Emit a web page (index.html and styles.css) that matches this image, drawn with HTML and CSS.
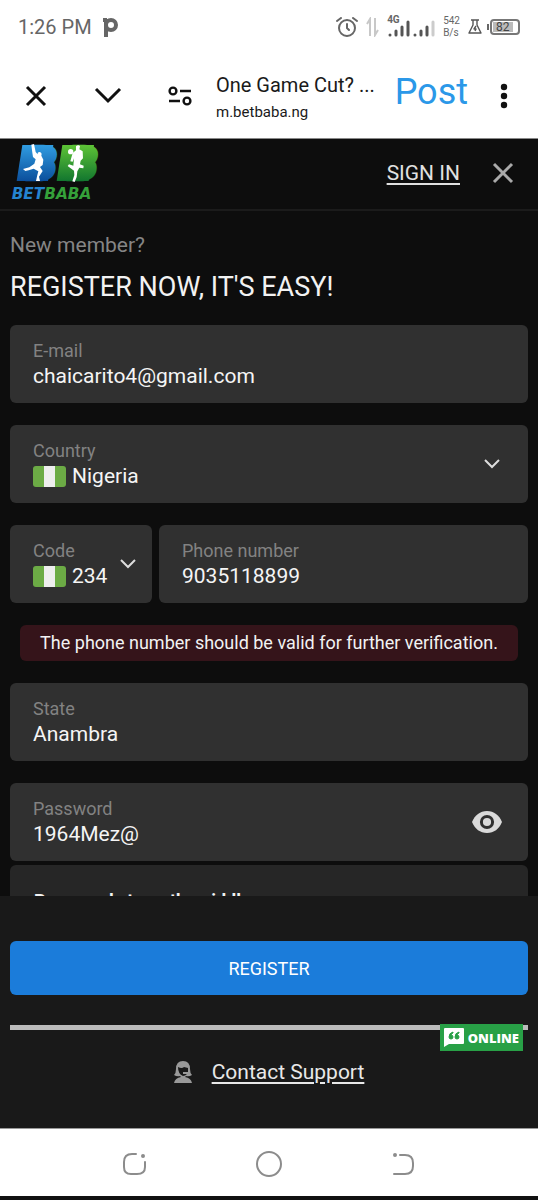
FILE: index.html
```html
<!DOCTYPE html>
<html lang="en">
<head>
  <meta charset="UTF-8" />
  <title>One Game Cut? - Betbaba</title>
  <meta name="viewport" content="width=device-width, initial-scale=1" />
  <link rel="stylesheet" href="styles.css">
</head>
<body>
  <!-- Phone status bar -->
  <div class="status-bar">
    <span class="status-time">1:26 PM</span>
    <svg class="status-app" width="15" height="19" viewBox="0 0 15 19" fill="none" stroke="#666" stroke-width="4">
      <path d="M3 19V1M0 2H4" />
      <circle cx="8" cy="7" r="5" />
    </svg>
    <div class="status-icons">
      <svg width="22" height="20" viewBox="0 0 22 20" fill="none" stroke="#666" stroke-width="2" stroke-linecap="round">
        <circle cx="11" cy="11" r="8" />
        <path d="M1 4L5 1M21 4L17 1M11 7V11L13 13" />
      </svg>
      <svg width="13" height="20" viewBox="0 0 13 20" fill="none" stroke="#c8c8c8" stroke-width="2">
        <path d="M4 19V2L1 7M9 1V18L12 13" />
      </svg>
      <div class="signal">
        <span class="signal-type">4G</span>
        <svg width="48" height="17" viewBox="0 0 48 17" stroke="#555" stroke-width="3" stroke-linecap="round">
          <path d="M3 15V15M9 15V11M15 15V7M21 15V2M28 15V15M34 15V11M40 15V7" />
          <path d="M46 15V2" stroke="#ccc" />
        </svg>
      </div>
      <div class="speed">542<br />B/s</div>
      <svg width="14" height="16" viewBox="0 0 14 16" fill="none" stroke="#555" stroke-width="1.4" stroke-linejoin="round">
        <path d="M3 1H11M5 1V6L1 14H13L9 6V1M8 7L6 10H8L7 12" />
      </svg>
      <div class="battery"><span>82</span></div>
    </div>
  </div>

  <!-- Browser bar -->
  <div class="browser-bar">
    <button class="icon-btn" aria-label="Close tab">
      <svg width="22" height="22" viewBox="0 0 22 22" fill="none" stroke="#111" stroke-width="3">
        <path d="M2 2L20 20M20 2L2 20" />
      </svg>
    </button>
    <button class="icon-btn" aria-label="Minimise">
      <svg width="28" height="18" viewBox="0 0 28 18" fill="none" stroke="#111" stroke-width="3">
        <path d="M2 2L14 14L26 2" />
      </svg>
    </button>
    <button class="icon-btn" aria-label="Site settings">
      <svg width="24" height="20" viewBox="0 0 24 20" fill="none" stroke="#111" stroke-width="2.4">
        <circle cx="5" cy="5" r="3.4" />
        <circle cx="19" cy="15" r="3.4" />
        <path d="M12 5H23M1 15H12" />
      </svg>
    </button>
    <div class="page-info">
      <div class="page-title">One Game Cut? ...</div>
      <div class="page-url">m.betbaba.ng</div>
    </div>
    <button class="post-btn">Post</button>
    <button class="icon-btn more-btn" aria-label="More">
      <svg width="8" height="26" viewBox="0 0 8 26" fill="#111">
        <circle cx="4" cy="4" r="3.2" />
        <circle cx="4" cy="13" r="3.2" />
        <circle cx="4" cy="22" r="3.2" />
      </svg>
    </button>
  </div>

  <!-- Site header -->
  <header class="site-header">
    <a href="#" class="logo" aria-label="Betbaba">
      <svg width="94" height="58" viewBox="30 20 282 174">
        <defs>
          <linearGradient id="blue" gradientUnits="userSpaceOnUse" x1="0" y1="28" x2="0" y2="134">
            <stop offset="0" stop-color="#2f9be0" />
            <stop offset="1" stop-color="#0b4f9c" />
          </linearGradient>
          <linearGradient id="green" gradientUnits="userSpaceOnUse" x1="0" y1="28" x2="0" y2="134">
            <stop offset="0" stop-color="#5cc236" />
            <stop offset="1" stop-color="#12762f" />
          </linearGradient>
        </defs>
        <g class="logo-mark">
          <text x="76" y="124" fill="url(#blue)" stroke="url(#blue)">B</text>
          <path d="M67 26H160L144 134H50Z" fill="url(#blue)" />
          <text x="199" y="124" fill="url(#green)" stroke="url(#green)">B</text>
          <path d="M187 26H282L266 134H170Z" fill="url(#green)" />
        </g>
        <path d="M94 25L102 23L107 47L113 54Q112 47 119 47Q127 49 124 58L130 70L128 86L120 92L128 104L117 121L120 134L108 134L112 116L115 105L101 97L86 102L76 104L69 98L88 93L103 82L107 69L99 62L97 49Z" fill="#fff" />
        <g fill="#fff">
          <circle cx="212" cy="46" r="8" />
          <path d="M228 30Q234 24 240 29L238 39L248 45L249 66L242 73L240 84L251 88L250 96L238 94L232 105L230 122L224 137L217 135L223 116L222 103L212 96L203 89L207 84L220 88L222 66L218 76L211 75L218 50L228 42Z" />
        </g>
        <text class="logo-word" x="35" y="189"><tspan fill="#2583cf">BET</tspan><tspan fill="#35a13a">BABA</tspan></text>
      </svg>
    </a>
    <a href="#" class="sign-in">SIGN IN</a>
    <button class="icon-btn" aria-label="Close">
      <svg width="22" height="22" viewBox="0 0 22 22" fill="none" stroke="#aaa" stroke-width="3">
        <path d="M2 2L20 20M20 2L2 20" />
      </svg>
    </button>
  </header>

  <!-- Registration form -->
  <main class="content">
    <p class="intro">New member?</p>
    <h1>REGISTER NOW, IT'S EASY!</h1>

    <form class="register-form" id="registerForm">
      <div class="field">
        <label for="email">E-mail</label>
        <input type="email" id="email" value="chaicarito4@gmail.com" autocomplete="off" />
      </div>

      <div class="field">
        <label for="country">Country</label>
        <div class="flag-row">
          <span class="flag"></span>
          <select id="country"><option>Nigeria</option></select>
        </div>
        <svg class="field-icon" width="16" height="10" viewBox="0 0 16 10" fill="none" stroke="#ddd" stroke-width="2">
          <path d="M1 1L8 8L15 1" />
        </svg>
      </div>

      <div class="phone-row">
        <div class="field code-field">
          <label for="code">Code</label>
          <div class="flag-row">
            <span class="flag"></span>
            <select id="code"><option>234</option></select>
          </div>
          <svg class="field-icon" width="16" height="10" viewBox="0 0 16 10" fill="none" stroke="#ddd" stroke-width="2">
            <path d="M1 1L8 8L15 1" />
          </svg>
        </div>
        <div class="field">
          <label for="phone">Phone number</label>
          <input type="tel" id="phone" value="9035118899" />
        </div>
      </div>

      <p class="notice">The phone number should be valid for further verification.</p>

      <div class="field">
        <label for="state">State</label>
        <input type="text" id="state" value="Anambra" />
      </div>

      <div class="password-group">
        <div class="field">
          <label for="password">Password</label>
          <input type="text" id="password" value="1964Mez@" autocomplete="off" />
          <button type="button" class="icon-btn field-icon" aria-label="Hide password">
            <svg width="30" height="22" viewBox="0 0 30 22">
              <path d="M15 0C8 0 3 4 0 11C3 18 8 22 15 22S27 18 30 11C27 4 22 0 15 0Z" fill="#dadada" />
              <circle cx="15" cy="11" r="5.6" fill="#dadada" stroke="#303030" stroke-width="3" />
            </svg>
          </button>
        </div>
        <div class="strength">Password strength: middle</div>
      </div>
    </form>
  </main>

  <!-- Fixed actions under the form -->
  <footer class="actions">
    <button class="register-btn" type="submit" form="registerForm">REGISTER</button>
    <div class="divider">
      <a href="#" class="online">
        <svg width="20" height="19" viewBox="0 0 20 19">
          <path d="M1 0H19Q20 0 20 1V15Q20 16 19 16H5L0 19V1Q0 0 1 0Z" fill="#fff" />
          <path d="M9 4Q5 5 5 9A2 2 0 1 0 7 7Q7 6 9 5ZM15 4Q11 5 11 9A2 2 0 1 0 13 7Q13 6 15 5Z" fill="#28a046" stroke="#28a046" />
        </svg>
        <span>ONLINE</span>
      </a>
    </div>
    <div class="support">
      <svg width="18" height="22" viewBox="0 0 18 22" fill="#999">
        <path d="M9 0Q2 0 2 8Q2 12 0 14Q3 16 6 15L7 16Q1 17 0 22H18Q17 17 11 16L12 15Q15 16 18 14Q16 12 16 8Q16 0 9 0Z" />
        <path d="M4 6Q8 8 10 6L14 7V11H9V13H13Q11 15 9 15Q4 13 4 6Z" fill="#191919" />
      </svg>
      <a href="#">Contact Support</a>
    </div>
  </footer>

  <!-- Phone navigation -->
  <nav class="phone-nav">
    <button class="icon-btn" aria-label="Recent apps">
      <svg width="24" height="24" viewBox="0 0 24 24" fill="none" stroke="#8c8c8c" stroke-width="2" stroke-linecap="round">
        <path d="M14 2H10Q2 2 2 10V15Q2 22 9 22H15Q23 22 23 15V10" />
        <circle cx="21" cy="4" r="1" fill="#8c8c8c" />
      </svg>
    </button>
    <button class="icon-btn" aria-label="Home">
      <svg width="26" height="26" viewBox="0 0 26 26" fill="none" stroke="#8c8c8c" stroke-width="2">
        <circle cx="13" cy="13" r="12" />
      </svg>
    </button>
    <button class="icon-btn" aria-label="Back">
      <svg width="24" height="24" viewBox="0 0 24 24" fill="none" stroke="#8c8c8c" stroke-width="2" stroke-linecap="round">
        <path d="M8 3H13Q21 3 21 11V14Q21 22 13 22H2" />
        <circle cx="3" cy="3" r="1" fill="#8c8c8c" />
      </svg>
    </button>
  </nav>
</body>
</html>
```
FILE: styles.css
```css
* {
  margin: 0;
  padding: 0;
  box-sizing: border-box;
}

body {
  height: 100vh;
  display: flex;
  flex-direction: column;
  overflow: hidden;
  font-family: Roboto, "Liberation Sans", sans-serif;
  background: #0d0d0d;
  color: #f2f2f2;
}

svg {
  display: block;
  flex-shrink: 0;
}

button {
  border: none;
  background: none;
  font-family: inherit;
  cursor: pointer;
}

.icon-btn {
  display: flex;
  align-items: center;
  justify-content: center;
}

/* -----------------------------------------------
   Status bar
   ----------------------------------------------- */
.status-bar {
  flex: none;
  display: flex;
  align-items: center;
  height: 54px;
  padding: 0 18px;
  background: #fff;
  color: #666;
}
.status-time {
  font-size: 20px;
}
.status-app {
  margin-left: 11px;
}
.status-icons {
  display: flex;
  align-items: center;
  gap: 8px;
  margin-left: auto;
}
.signal {
  position: relative;
  padding-top: 2px;
}
.signal-type {
  position: absolute;
  top: -4px;
  left: 0;
  font-size: 10px;
  font-weight: 700;
  line-height: 12px;
}
.speed {
  font-size: 10px;
  line-height: 12px;
}
.battery {
  position: relative;
  display: flex;
  width: 30px;
  height: 16px;
  padding: 1px;
  border: 2px solid #777;
  border-radius: 4px;
}
.battery::before {
  content: "";
  position: absolute;
  left: -5px;
  top: 3px;
  width: 2px;
  height: 6px;
  background: #666;
}
.battery span {
  width: 82%;
  background: #bbb;
  color: #444;
  font-size: 12px;
  line-height: 10px;
  text-align: center;
}

/* -----------------------------------------------
   Browser bar
   ----------------------------------------------- */
.browser-bar {
  flex: none;
  display: flex;
  align-items: center;
  height: 85px;
  padding: 0 26px 0 24px;
  border-bottom: 1px solid #888;
  background: #fff;
  color: #1a1a1a;
}
.browser-bar .icon-btn {
  width: 24px;
  margin-right: 48px;
}
.browser-bar .icon-btn:nth-of-type(3) {
  margin-right: 24px;
}
.page-info {
  flex: 1;
  min-width: 0;
  padding-top: 4px;
  white-space: nowrap;
}
.page-title {
  font-size: 20px;
  line-height: 28px;
}
.page-url {
  font-size: 15px;
  line-height: 26px;
}
.post-btn {
  color: #2b98e8;
  font-size: 36px;
  line-height: 44px;
  padding-bottom: 8px;
}
.browser-bar .more-btn {
  width: 16px;
  margin: 0 0 0 28px;
}

/* -----------------------------------------------
   Site header
   ----------------------------------------------- */
.site-header {
  flex: none;
  display: flex;
  align-items: center;
  height: 72px;
  padding: 0 24px 3px 10px;
  border-bottom: 2px solid #1b1b1b;
}
.logo {
  padding-bottom: 2px;
}
.logo svg {
  overflow: visible;
}
.logo-mark text {
  font: italic bold 122px "DejaVu Sans", sans-serif;
  stroke-width: 20px;
  stroke-linejoin: round;
}
.logo-word {
  font: italic bold 46px "DejaVu Sans", sans-serif;
}
.sign-in {
  margin-left: auto;
  margin-right: 32px;
  color: #e0e0e0;
  font-size: 21px;
  text-underline-offset: 3px;
}

/* -----------------------------------------------
   Form
   ----------------------------------------------- */
.content {
  flex: 1;
  min-height: 0;
  overflow: hidden;
  padding: 20px 10px 0;
}
.intro {
  color: #858585;
  font-size: 21px;
  line-height: 28px;
}
h1 {
  margin: 10px 0 20px;
  font-size: 27px;
  font-weight: 400;
  line-height: 36px;
}
.register-form {
  display: flex;
  flex-direction: column;
  gap: 22px;
}
.field {
  position: relative;
  flex: 1;
  min-width: 0;
  height: 78px;
  padding: 14px 23px;
  border-radius: 6px;
  background: #303030;
}
.field label {
  display: block;
  color: #828282;
  font-size: 18px;
  line-height: 24px;
}
.field input,
.field select {
  display: block;
  width: 100%;
  height: 26px;
  border: none;
  outline: none;
  appearance: none;
  background: transparent;
  color: #f5f5f5;
  font-family: inherit;
  font-size: 21px;
}
.field-icon {
  position: absolute;
  right: 28px;
  top: 50%;
  transform: translateY(-50%);
}
.field button.field-icon {
  right: 26px;
}
.flag-row {
  display: flex;
  align-items: center;
  gap: 6px;
}
.flag {
  flex: none;
  width: 33px;
  height: 21px;
  border-radius: 3px;
  background: linear-gradient(90deg, #6cab45 33%, #eee 33%, #eee 67%, #6cab45 67%);
}
.phone-row {
  display: flex;
  gap: 7px;
}
.code-field {
  flex: 0 0 142px;
}
.code-field .field-icon {
  right: 16px;
}
.notice {
  margin: 0 10px;
  border-radius: 6px;
  background: #35141a;
  font-size: 18px;
  line-height: 36px;
  text-align: center;
}
.password-group {
  display: flex;
  flex-direction: column;
  gap: 4px;
}
.password-group .field {
  flex: none;
}
.strength {
  padding: 22px 24px;
  border-radius: 6px;
  background: #262626;
  font-size: 18px;
  font-weight: 700;
  line-height: 28px;
}

/* -----------------------------------------------
   Bottom actions
   ----------------------------------------------- */
.actions {
  flex: none;
  padding: 45px 10px 42px;
  background: #191919;
}
.register-btn {
  display: block;
  width: 100%;
  height: 54px;
  border-radius: 6px;
  background: #1b7cda;
  color: #fff;
  font-size: 18px;
}
.divider {
  position: relative;
  height: 5px;
  margin: 30px 0 28px;
  background: #bbb;
}
.online {
  position: absolute;
  top: -1px;
  right: 5px;
  display: flex;
  align-items: center;
  gap: 4px;
  height: 27px;
  padding: 0 4px;
  background: #28a046;
  color: #fff;
  font-family: "Open Sans", sans-serif;
  font-size: 13px;
  font-weight: 800;
  text-decoration: none;
}
.support {
  display: flex;
  align-items: center;
  justify-content: center;
  gap: 20px;
}
.support a {
  color: #e8e8e8;
  font-size: 21px;
  line-height: 28px;
  text-underline-offset: 3px;
}

/* -----------------------------------------------
   Phone navigation
   ----------------------------------------------- */
.phone-nav {
  flex: none;
  display: flex;
  align-items: center;
  justify-content: center;
  gap: 110px;
  height: 72px;
  padding-top: 2px;
  border-top: 1px solid #999;
  border-bottom: 4px solid #111;
  background: #fff;
}
```
